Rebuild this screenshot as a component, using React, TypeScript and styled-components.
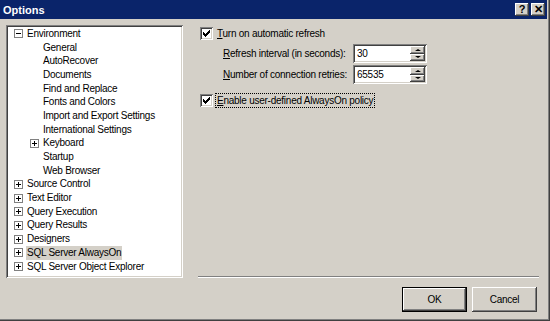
import styled, { createGlobalStyle } from 'styled-components'

const GlobalStyle = createGlobalStyle`
  html, body {
    margin: 0;
    padding: 0;
    background: #d4d0c8;
  }
  body {
    font-family: "Liberation Sans", Arial, sans-serif;
    font-size: 10px;
    letter-spacing: -0.25px;
    color: #000;
  }
`

const Window = styled.div`
  width: 550px;
  height: 321px;
  box-sizing: border-box;
  background: #d4d0c8;
  padding: 0 3px 3px 0;
  box-shadow: inset -1px -1px 0 #404040, inset -2px -2px 0 #808080;
  display: flex;
  flex-direction: column;
`

const TitleBar = styled.div`
  height: 19px;
  background: #0a246a;
  color: #fff;
  display: flex;
  align-items: center;
  justify-content: space-between;
  padding: 0 2px 0 3px;
  font-weight: bold;
  font-size: 11px;
  letter-spacing: 0;
`

const TitleButtons = styled.div`
  display: flex;
  gap: 2px;
`

const CaptionButton = styled.div`
  width: 14px;
  height: 13px;
  box-sizing: border-box;
  background: #d4d0c8;
  color: #000;
  display: flex;
  align-items: center;
  justify-content: center;
  font-weight: bold;
  font-size: 11px;
  line-height: 1;
  box-shadow: inset -1px -1px 0 #404040, inset 1px 1px 0 #fff,
    inset -2px -2px 0 #808080;
`

const Body = styled.div`
  flex: 1;
  display: flex;
  align-items: flex-start;
  padding: 6px 0 0 6px;
`

const Tree = styled.div`
  width: 177px;
  height: 253px;
  box-sizing: border-box;
  background: #fff;
  padding: 2px;
  box-shadow: inset 1px 1px 0 #808080, inset -1px -1px 0 #fff,
    inset 2px 2px 0 #404040, inset -2px -2px 0 #d4d0c8;
`

const TreeRow = styled.div<{ $level: number }>`
  height: 13.7px;
  display: flex;
  align-items: center;
  padding-left: ${(p) => 6 + p.$level * 16}px;
  white-space: nowrap;
`

const ExpanderSlot = styled.div`
  width: 9px;
  height: 9px;
  margin-right: 4px;
  flex-shrink: 0;
`

const Expander = styled(ExpanderSlot)`
  box-sizing: border-box;
  border: 1px solid #808080;
  background: #fff;
  position: relative;

  &::before {
    content: '';
    position: absolute;
    left: 1px;
    top: 3px;
    width: 5px;
    height: 1px;
    background: #000;
  }
`

const Plus = styled(Expander)`
  &::after {
    content: '';
    position: absolute;
    left: 3px;
    top: 1px;
    width: 1px;
    height: 5px;
    background: #000;
  }
`

const TreeLabel = styled.span<{ $selected?: boolean }>`
  padding: 1px 1px;
  margin-left: -1px;
  line-height: 12px;
  background: ${(p) => (p.$selected ? '#d4d0c8' : 'transparent')};
`

const RightPane = styled.div`
  flex: 1;
  height: 293px;
  margin-left: 15px;
  margin-right: 8px;
  display: flex;
  flex-direction: column;
`

const Settings = styled.div`
  flex: 1;
  padding: 1px 0 0 2px;
`

const CheckRow = styled.label<{ $focused?: boolean }>`
  display: flex;
  align-items: center;
  gap: 4px;
  height: 14px;
  white-space: nowrap;
  margin-bottom: ${(p) => (p.$focused ? 0 : 4)}px;
`

const CheckBox = styled.div`
  width: 13px;
  height: 13px;
  box-sizing: border-box;
  background: #fff;
  flex-shrink: 0;
  box-shadow: inset 1px 1px 0 #808080, inset -1px -1px 0 #fff,
    inset 2px 2px 0 #404040, inset -2px -2px 0 #d4d0c8;
  display: flex;
  align-items: center;
  justify-content: center;
`

const CheckText = styled.span<{ $focused?: boolean }>`
  padding: 0 1px;
  margin-left: -1px;
  outline: ${(p) => (p.$focused ? '1px dotted #000' : 'none')};
  line-height: 13px;
`

const Key = styled.span`
  text-decoration: underline;
`

const FieldGrid = styled.div`
  display: grid;
  grid-template-columns: 130px 74px;
  row-gap: 2px;
  align-items: center;
  padding-left: 23px;
  margin-bottom: 9px;
  white-space: nowrap;
`

const Spinner = styled.div`
  height: 19px;
  box-sizing: border-box;
  background: #fff;
  padding: 2px;
  display: flex;
  box-shadow: inset 1px 1px 0 #808080, inset -1px -1px 0 #fff,
    inset 2px 2px 0 #404040, inset -2px -2px 0 #d4d0c8;
`

const SpinValue = styled.div`
  flex: 1;
  padding-left: 2px;
  line-height: 15px;
`

const SpinButtons = styled.div`
  width: 15px;
  display: flex;
  flex-direction: column;
`

const SpinButton = styled.div<{ $down?: boolean }>`
  flex: 1;
  background: #d4d0c8;
  box-shadow: inset -1px -1px 0 #404040, inset 1px 1px 0 #fff,
    inset -2px -2px 0 #808080;
  display: flex;
  align-items: center;
  justify-content: center;

  &::after {
    content: '';
    border-left: 3px solid transparent;
    border-right: 3px solid transparent;
    ${(p) =>
      p.$down ? 'border-top: 2px solid #000;' : 'border-bottom: 2px solid #000;'}
  }
`

const Separator = styled.div`
  height: 0;
  border-top: 1px solid #808080;
  border-bottom: 1px solid #fff;
  margin-bottom: 9px;
`

const ButtonRow = styled.div`
  display: flex;
  justify-content: flex-end;
  gap: 5px;
  padding-right: 2px;
  margin-bottom: 6px;
`

const Button = styled.div<{ $default?: boolean }>`
  width: 65px;
  height: 25px;
  box-sizing: border-box;
  background: #d4d0c8;
  display: flex;
  align-items: center;
  justify-content: center;
  border: ${(p) => (p.$default ? '1px solid #000' : 'none')};
  box-shadow: inset -1px -1px 0 #404040, inset 1px 1px 0 #fff,
    inset -2px -2px 0 #808080;
`

const Tick = () => (
  <svg width="7" height="7" viewBox="0 0 7 7">
    <path d="M0 2h1v1h1v1h1V3h1V2h1V1h1V0h1v3H6v1H5v1H4v1H3v1H2V6H1V5H0z" fill="#000" />
  </svg>
)

type Node = { label: string; level: number; kind: 'open' | 'closed' | 'leaf'; selected?: boolean }

const nodes: Node[] = [
  { label: 'Environment', level: 0, kind: 'open' },
  { label: 'General', level: 1, kind: 'leaf' },
  { label: 'AutoRecover', level: 1, kind: 'leaf' },
  { label: 'Documents', level: 1, kind: 'leaf' },
  { label: 'Find and Replace', level: 1, kind: 'leaf' },
  { label: 'Fonts and Colors', level: 1, kind: 'leaf' },
  { label: 'Import and Export Settings', level: 1, kind: 'leaf' },
  { label: 'International Settings', level: 1, kind: 'leaf' },
  { label: 'Keyboard', level: 1, kind: 'closed' },
  { label: 'Startup', level: 1, kind: 'leaf' },
  { label: 'Web Browser', level: 1, kind: 'leaf' },
  { label: 'Source Control', level: 0, kind: 'closed' },
  { label: 'Text Editor', level: 0, kind: 'closed' },
  { label: 'Query Execution', level: 0, kind: 'closed' },
  { label: 'Query Results', level: 0, kind: 'closed' },
  { label: 'Designers', level: 0, kind: 'closed' },
  { label: 'SQL Server AlwaysOn', level: 0, kind: 'closed', selected: true },
  { label: 'SQL Server Object Explorer', level: 0, kind: 'closed' },
]

const App = () => (
  <>
    <GlobalStyle />
    <Window>
      <TitleBar>
        <span>Options</span>
        <TitleButtons>
          <CaptionButton>?</CaptionButton>
          <CaptionButton>✕</CaptionButton>
        </TitleButtons>
      </TitleBar>
      <Body>
        <Tree>
          {nodes.map((n) => (
            <TreeRow key={n.label} $level={n.level}>
              {n.kind === 'open' && <Expander />}
              {n.kind === 'closed' && <Plus />}
              {n.kind === 'leaf' && <ExpanderSlot />}
              <TreeLabel $selected={n.selected}>{n.label}</TreeLabel>
            </TreeRow>
          ))}
        </Tree>
        <RightPane>
          <Settings>
            <CheckRow>
              <CheckBox>
                <Tick />
              </CheckBox>
              <CheckText>
                <Key>T</Key>urn on automatic refresh
              </CheckText>
            </CheckRow>
            <FieldGrid>
              <span>
                <Key>R</Key>efresh interval (in seconds):
              </span>
              <Spinner>
                <SpinValue>30</SpinValue>
                <SpinButtons>
                  <SpinButton />
                  <SpinButton $down />
                </SpinButtons>
              </Spinner>
              <span>
                <Key>N</Key>umber of connection retries:
              </span>
              <Spinner>
                <SpinValue>65535</SpinValue>
                <SpinButtons>
                  <SpinButton />
                  <SpinButton $down />
                </SpinButtons>
              </Spinner>
            </FieldGrid>
            <CheckRow $focused>
              <CheckBox>
                <Tick />
              </CheckBox>
              <CheckText $focused>
                <Key>E</Key>nable user-defined AlwaysOn policy
              </CheckText>
            </CheckRow>
          </Settings>
          <Separator />
          <ButtonRow>
            <Button $default>OK</Button>
            <Button>Cancel</Button>
          </ButtonRow>
        </RightPane>
      </Body>
    </Window>
  </>
)

export default App
